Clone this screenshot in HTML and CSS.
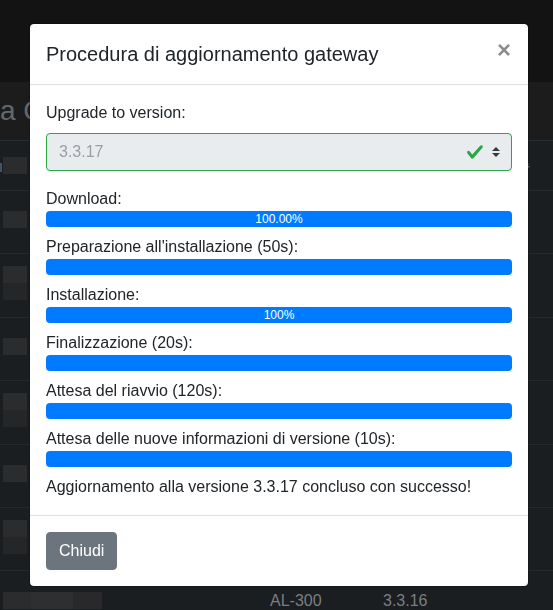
FILE: index.html
```html
<!DOCTYPE html>
<html lang="it">
<head>
<meta charset="utf-8">
<title>Procedura di aggiornamento gateway</title>
<link rel="stylesheet" href="styles.css">
</head>
<body>
<div class="page">
  <div class="navbar"></div>
  <div class="heading"><h2 class="heading-title">a G</h2></div>
  <div class="table">
    <div class="trow thead">
      <div class="cell first"><span class="glint glint-left"></span><span class="redact"></span></div>
      <div class="cell"></div>
      <div class="cell"></div>
      <div class="cell sort-cell">
        <span class="sort">
          <span class="tri up"></span>
          <span class="tri down"></span>
        </span>
      </div>
    </div>
    <div class="trow">
      <div class="cell first"><span class="redact"></span></div>
      <div class="cell"></div><div class="cell"></div><div class="cell"></div>
    </div>
    <div class="trow">
      <div class="cell first stack"><span class="redact"></span><span class="redact dim"></span></div>
      <div class="cell"></div><div class="cell"></div><div class="cell"></div>
    </div>
    <div class="trow">
      <div class="cell first"><span class="redact"></span></div>
      <div class="cell"></div><div class="cell"></div><div class="cell"></div>
    </div>
    <div class="trow">
      <div class="cell first stack"><span class="redact"></span><span class="redact dim"></span></div>
      <div class="cell"></div><div class="cell"></div><div class="cell"></div>
    </div>
    <div class="trow">
      <div class="cell first"><span class="redact"></span></div>
      <div class="cell"></div><div class="cell"></div><div class="cell"></div>
    </div>
    <div class="trow">
      <div class="cell first stack"><span class="redact"></span><span class="redact dim"></span></div>
      <div class="cell"></div><div class="cell"></div><div class="cell"></div>
    </div>
    <div class="trow">
      <div class="cell first"><span class="redact wide"></span></div>
      <div class="cell text">AL-300</div>
      <div class="cell text">3.3.16</div>
      <div class="cell"></div>
    </div>
  </div>
</div>

<div class="modal-layer">
  <div class="modal-content">
    <div class="modal-header">
      <h5 class="modal-title">Procedura di aggiornamento gateway</h5>
      <span class="close">&times;</span>
    </div>
    <div class="modal-body">
      <div class="form-group">
        <div class="label">Upgrade to version:</div>
        <div class="custom-select">
          <span class="select-value">3.3.17</span>
          <svg class="check" width="18" height="18" viewBox="0 0 8 8"><path fill="#28a745" d="M2.3 6.73L.6 4.53c-.4-1.04.46-1.4 1.1-.8l1.1 1.4 3.4-3.8c.6-.63 1.6-.27 1.2.7l-4 4.6c-.43.5-.8.4-1.1.1z"/></svg>
          <svg class="arrows" width="8" height="10" viewBox="0 0 4 5"><path fill="#343a40" d="M2 0L0 2h4zm0 5L0 3h4z"/></svg>
        </div>
      </div>

      <div class="step">
        <div class="label">Download:</div>
        <div class="progress"><div class="progress-bar">100.00%</div></div>
      </div>
      <div class="step">
        <div class="label">Preparazione all'installazione (50s):</div>
        <div class="progress"><div class="progress-bar"></div></div>
      </div>
      <div class="step">
        <div class="label">Installazione:</div>
        <div class="progress"><div class="progress-bar">100%</div></div>
      </div>
      <div class="step">
        <div class="label">Finalizzazione (20s):</div>
        <div class="progress"><div class="progress-bar"></div></div>
      </div>
      <div class="step">
        <div class="label">Attesa del riavvio (120s):</div>
        <div class="progress"><div class="progress-bar"></div></div>
      </div>
      <div class="step">
        <div class="label">Attesa delle nuove informazioni di versione (10s):</div>
        <div class="progress"><div class="progress-bar"></div></div>
      </div>
      <div class="result">Aggiornamento alla versione 3.3.17 concluso con successo!</div>
    </div>
    <div class="modal-footer">
      <button class="btn" type="button">Chiudi</button>
    </div>
  </div>
</div>
</body>
</html>
```

FILE: styles.css
```css
* { box-sizing: border-box; }

html, body {
  margin: 0;
  padding: 0;
}

body {
  width: 553px;
  height: 610px;
  overflow: hidden;
  background: #1b1e21;
  font-family: "Liberation Sans", Arial, sans-serif;
  font-size: 16px;
  line-height: 1.5;
  color: #212529;
}

/* ---------- dimmed page behind the modal ---------- */
.page {
  display: flex;
  flex-direction: column;
}

.navbar {
  height: 82px;
  background: #131313;
}

.heading {
  height: 58px;
  background: #1c1c1c;
  padding-top: 12px;
}

.heading-title {
  margin: 0;
  font-size: 28px;
  font-weight: 400;
  line-height: 34px;
  color: #64686c;
  white-space: nowrap;
}

.table {
  display: flex;
  flex-direction: column;
  background: #1b1e21;
}

.trow {
  display: grid;
  grid-template-columns: 258px 113px 1fr 40px;
  height: 63.4px;
  border-top: 1px solid #25292d;
  align-items: center;
  padding-bottom: 5px;
}

.thead {
  height: 50px;
  border-top: 1px solid #2a2d30;
  padding-bottom: 0;
}

.cell {
  display: flex;
  align-items: center;
}

.cell.first {
  padding-left: 3px;
  position: relative;
}

.cell.stack {
  flex-direction: column;
  align-items: flex-start;
}

.cell.text {
  padding-left: 12px;
  color: #7a7e82;
  font-size: 16px;
  padding-top: 2px;
}

.redact {
  display: block;
  width: 24px;
  height: 17px;
  background: #2b2c2e;
}

.redact.dim {
  background: #252628;
}

.redact.wide {
  width: 99px;
  background: linear-gradient(90deg, #2b2c2e 0 28px, #2e2f31 28px 70px, #29292b 70px);
}

.glint {
  position: absolute;
  left: 0;
  top: 6px;
  width: 2px;
  height: 9px;
  background: #3f5566;
}

.sort-cell {
  justify-content: flex-start;
  padding-left: 7px;
}

.sort {
  display: flex;
  flex-direction: column;
  gap: 1px;
}

.tri {
  width: 0;
  height: 0;
  border-left: 5px solid transparent;
  border-right: 5px solid transparent;
}

.tri.up {
  border-bottom: 6px solid #3d3f42;
}

.tri.down {
  border-top: 6px solid #6a6c6f;
}

/* ---------- modal ---------- */
.modal-layer {
  position: fixed;
  inset: 0;
  padding: 23px 0 0 29px;
}

.modal-content {
  width: 500px;
  background: #fff;
  background-clip: padding-box;
  border: 1px solid rgba(0, 0, 0, 0.2);
  border-radius: 5px;
  display: flex;
  flex-direction: column;
}

.modal-header {
  display: flex;
  align-items: flex-start;
  justify-content: space-between;
  padding: 16px;
  border-bottom: 1px solid #dee2e6;
}

.modal-title {
  margin: 0;
  font-size: 20px;
  font-weight: 400;
  line-height: 28px;
  color: #212529;
}

.close {
  font-size: 24px;
  font-weight: 700;
  line-height: 1;
  color: #000;
  opacity: 0.45;
  margin-top: -2px;
  margin-right: 1px;
}

.modal-body {
  padding: 16px;
}

.form-group {
  margin-bottom: 16px;
}

.label {
  line-height: 24px;
}

.form-group .label {
  margin-bottom: 8px;
}

.custom-select {
  display: flex;
  align-items: center;
  height: 38px;
  padding: 6px 11px 6px 12px;
  background: #e9ecef;
  border: 1px solid #28a745;
  border-radius: 4px;
  color: #9a9fa4;
}

.select-value {
  flex: 1;
}

.check {
  margin-right: 8px;
}

.step {
  margin-bottom: 8px;
}

.progress {
  height: 16px;
  background: #e9ecef;
  border-radius: 4px;
  overflow: hidden;
  display: flex;
}

.progress-bar {
  width: 100%;
  background: #007bff;
  color: #fff;
  font-size: 12px;
  line-height: 16px;
  text-align: center;
}

.result {
  line-height: 24px;
}

.modal-footer {
  display: flex;
  justify-content: flex-start;
  padding: 12px;
  border-top: 1px solid #dee2e6;
}

.btn {
  margin: 4px;
  height: 38px;
  padding: 6px 12px;
  font-family: inherit;
  font-size: 16px;
  line-height: 24px;
  color: #fff;
  background: #6c757d;
  border: 1px solid #6c757d;
  border-radius: 4px;
}
```
